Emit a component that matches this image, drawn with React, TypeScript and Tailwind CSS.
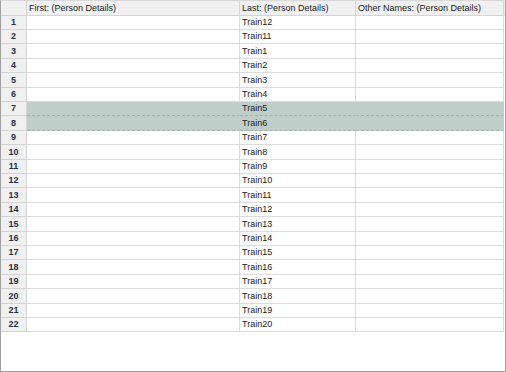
import React from "react";

const lasts = [
  "Train12","Train11","Train1","Train2","Train3","Train4","Train5","Train6","Train7","Train8","Train9",
  "Train10","Train11","Train12","Train13","Train14","Train15","Train16","Train17","Train18","Train19","Train20",
];

export default function App() {
  const rows = lasts.map((l, i) => {
    const top = Math.round(15.5 + 14.4 * i);
    const bottom = Math.round(15.5 + 14.4 * (i + 1));
    return { n: i + 1, last: l, tall: bottom - top === 15 };
  });
  return (
    <div
      className="w-[506px] h-[372px] bg-white border border-[#a0a0a0] border-t-[#d9d9d9] overflow-hidden text-[#1b1b1b]"
      style={{ fontFamily: '"Liberation Sans", Arial, sans-serif' }}
    >
      <div className="flex h-[15px] bg-[#f0f0f0] border-b border-[#d5d5d5] text-[9px] leading-[14px]">
        <div className="w-[26px] shrink-0 border-r border-[#d5d5d5]" />
        <div className="w-[213px] shrink-0 border-r border-[#d5d5d5] pl-[2px]">First: (Person Details)</div>
        <div className="w-[116px] shrink-0 border-r border-[#d5d5d5] pl-[2px]">Last: (Person Details)</div>
        <div className="w-[148px] shrink-0 border-r border-[#d5d5d5] pl-[2px]">Other Names: (Person Details)</div>
      </div>
      {rows.map((r) => {
        const sel = r.n === 7 || r.n === 8;
        const cell = sel
          ? "shrink-0 bg-[#c0cec9] border-r border-b border-dashed border-r-[#c0cec9] border-b-[#a3b1ad]"
          : "shrink-0 border-r border-b border-[#dcdcdc]";
        return (
          <div key={r.n} className={`flex text-[9px] ${r.tall ? "h-[15px] leading-[14px]" : "h-[14px] leading-[13px]"}`}>
            <div className="w-[26px] shrink-0 bg-[#f0f0f0] border-r border-b border-[#d5d5d5] text-center font-bold text-[#24304a]">
              {r.n}
            </div>
            <div className={`w-[213px] ${cell}`} />
            <div className={`w-[116px] ${cell} pl-[2px]`}>{r.last}</div>
            <div className={`w-[148px] ${cell}`} />
          </div>
        );
      })}
    </div>
  );
}
